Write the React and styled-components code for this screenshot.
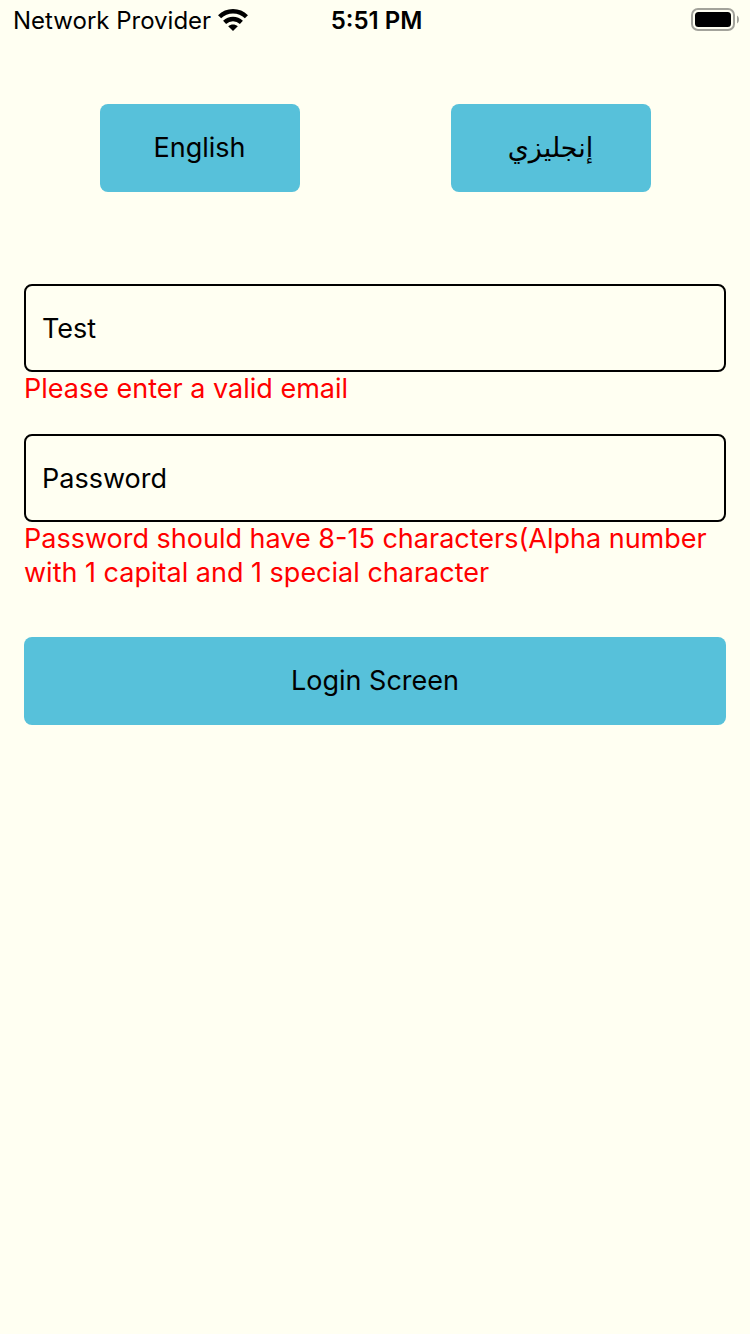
import React, { useState } from "react";
import styled, { createGlobalStyle } from "styled-components";

const GlobalStyle = createGlobalStyle`
  *, *::before, *::after { box-sizing: border-box; }
  body {
    margin: 0;
    background: #fffff2;
    color: #000;
    font-family: Inter, "Noto Sans", "DejaVu Sans", sans-serif;
    font-size: 27px;
    line-height: 34px;
  }
`;

const Screen = styled.div`
  min-height: 100vh;
`;

const StatusBar = styled.header`
  display: grid;
  grid-template-columns: 1fr auto 1fr;
  align-items: start;
  height: 40px;
  padding: 8px 10px 0 13px;
  font-size: 24px;
  line-height: 26px;
`;

const Carrier = styled.div`
  display: flex;
  align-items: flex-start;
  gap: 7px;
`;

const Clock = styled.time`
  font-weight: 600;
`;

const Battery = styled.div`
  display: flex;
  justify-content: flex-end;
`;

const Content = styled.main`
  padding: 64px 24px;
`;

const LanguageRow = styled.div`
  display: flex;
  justify-content: space-around;
  margin-bottom: 92px;
`;

const Button = styled.button`
  width: ${({ $wide }) => ($wide ? "100%" : "200px")};
  height: 88px;
  padding: 0;
  border: 0;
  border-radius: 8px;
  background: #57c1da;
  color: #000;
  font: inherit;
  cursor: pointer;
`;

const Form = styled.form`
  display: flex;
  flex-direction: column;
`;

const Field = styled.div`
  margin-bottom: ${({ $last }) => ($last ? "47px" : "28px")};
`;

const Input = styled.input`
  display: block;
  width: 100%;
  height: 88px;
  padding: 0 16px;
  border: 2px solid #000;
  border-radius: 8px;
  background: transparent;
  color: #000;
  font: inherit;
  outline: none;

  &::placeholder {
    color: #000;
    opacity: 1;
  }
`;

const ErrorText = styled.p`
  margin: 0;
  color: #ff0000;
`;

function WifiIcon() {
  return (
    <svg width="30" height="24" viewBox="0 -1 30 24" fill="none" stroke="#000" strokeWidth="4.4" aria-hidden="true">
      <path d="M1.6 7.8C9 0.4 21 0.4 28.4 7.8" />
      <path d="M6.6 13.3C11.4 8.8 18.6 8.8 23.4 13.3" />
      <path d="M15 22L10.2 17.3C13 15 17 15 19.8 17.3Z" fill="#000" stroke="none" />
    </svg>
  );
}

function BatteryIcon() {
  return (
    <svg width="49" height="23" viewBox="0 0 49 23" role="img" aria-label="Battery full">
      <rect x="1" y="1" width="42" height="21" rx="6" fill="none" stroke="#a3a39b" strokeWidth="2" />
      <rect x="4" y="4" width="36" height="15" rx="3.5" fill="#000" />
      <path d="M46 7.5C48.6 8.8 48.6 14.2 46 15.5Z" fill="#a3a39b" />
    </svg>
  );
}

export default function App() {
  const [email, setEmail] = useState("Test");
  const [password, setPassword] = useState("");

  return (
    <Screen>
      <GlobalStyle />
      <StatusBar>
        <Carrier>
          <span>Network Provider</span>
          <WifiIcon />
        </Carrier>
        <Clock>5:51 PM</Clock>
        <Battery>
          <BatteryIcon />
        </Battery>
      </StatusBar>
      <Content>
        <LanguageRow>
          <Button type="button">English</Button>
          <Button type="button" lang="ar">إنجليزي</Button>
        </LanguageRow>
        <Form noValidate onSubmit={(event) => event.preventDefault()}>
          <Field>
            <Input
              type="email"
              aria-label="Email"
              aria-describedby="email-error"
              aria-invalid="true"
              value={email}
              onChange={(event) => setEmail(event.target.value)}
            />
            <ErrorText id="email-error">Please enter a valid email</ErrorText>
          </Field>
          <Field $last>
            <Input
              type="password"
              aria-label="Password"
              aria-describedby="password-error"
              aria-invalid="true"
              placeholder="Password"
              value={password}
              onChange={(event) => setPassword(event.target.value)}
            />
            <ErrorText id="password-error">
              Password should have 8-15 characters(Alpha number with 1 capital and 1 special character
            </ErrorText>
          </Field>
          <Button type="submit" $wide>Login Screen</Button>
        </Form>
      </Content>
    </Screen>
  );
}
